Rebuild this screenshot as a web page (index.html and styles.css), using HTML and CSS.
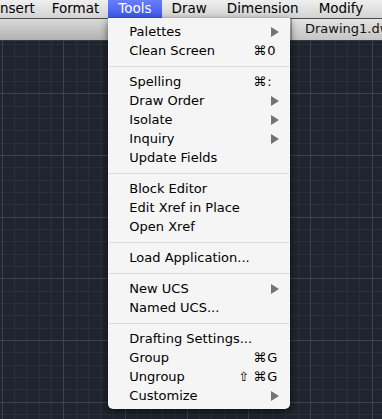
FILE: index.html
```html
<!DOCTYPE html>
<html lang="en">
<head>
    <meta charset="UTF-8">
    <title>Tools menu</title>
    <link rel="stylesheet" href="styles.css">
</head>
<body>
    <div class="menubar">
        <div class="menubar-item">nsert</div>
        <div class="menubar-item">Format</div>
        <div class="menubar-item active">
            Tools
            <div class="menu">
                <div class="menu-row"><span class="label">Palettes</span><span class="arrow"></span></div>
                <div class="menu-row"><span class="label">Clean Screen</span><span class="keys"><span class="mods">⌘</span><span class="key">0</span></span></div>
                <div class="separator"></div>
                <div class="menu-row"><span class="label">Spelling</span><span class="keys"><span class="mods">⌘</span><span class="key">:</span></span></div>
                <div class="menu-row"><span class="label">Draw Order</span><span class="arrow"></span></div>
                <div class="menu-row"><span class="label">Isolate</span><span class="arrow"></span></div>
                <div class="menu-row"><span class="label">Inquiry</span><span class="arrow"></span></div>
                <div class="menu-row"><span class="label">Update Fields</span></div>
                <div class="separator"></div>
                <div class="menu-row"><span class="label">Block Editor</span></div>
                <div class="menu-row"><span class="label">Edit Xref in Place</span></div>
                <div class="menu-row"><span class="label">Open Xref</span></div>
                <div class="separator"></div>
                <div class="menu-row"><span class="label">Load Application...</span></div>
                <div class="separator"></div>
                <div class="menu-row"><span class="label">New UCS</span><span class="arrow"></span></div>
                <div class="menu-row"><span class="label">Named UCS...</span></div>
                <div class="separator"></div>
                <div class="menu-row"><span class="label">Drafting Settings...</span></div>
                <div class="menu-row"><span class="label">Group</span><span class="keys"><span class="mods">⌘</span><span class="key">G</span></span></div>
                <div class="menu-row"><span class="label">Ungroup</span><span class="keys"><span class="mods">⇧ ⌘</span><span class="key">G</span></span></div>
                <div class="menu-row"><span class="label">Customize</span><span class="arrow"></span></div>
            </div>
        </div>
        <div class="menubar-item right">Draw</div>
        <div class="menubar-item right">Dimension</div>
        <div class="menubar-item right">Modify</div>
    </div>

    <div class="tabstrip">
        <div class="tab-space"></div>
        <div class="tab">Drawing1.dwg</div>
    </div>

    <div class="canvas"></div>
</body>
</html>
```

FILE: styles.css
```css
html, body {
    margin: 0;
    padding: 0;
}

body {
    width: 382px;
    height: 419px;
    overflow: hidden;
    background-color: #1f252e;
    font-family: "DejaVu Sans", sans-serif;
    color: #000;
    display: flex;
    flex-direction: column;
}

/* top menu bar */
.menubar {
    height: 18px;
    flex: none;
    display: flex;
    background: linear-gradient(#efefef, #d3d3d3);
    border-bottom: 1px solid #4c4c4c;
    font-size: 13.5px;
    line-height: 16px;
    white-space: nowrap;
    position: relative;
    z-index: 2;
}

.menubar-item {
    padding: 0 9px;
    position: relative;
}

.menubar-item:first-child {
    padding-left: 0;
    padding-right: 8px;
}

.menubar-item.right {
    padding: 0 10px;
}

.menubar-item.active {
    padding: 0 10px;
    background: linear-gradient(#6a7ff7, #3856ee);
    color: #fff;
}

/* dropdown */
.menu {
    position: absolute;
    top: 18px;
    left: 0;
    width: 182px;
    padding: 4px 0;
    background-color: #f5f5f5;
    border-radius: 0 0 5px 5px;
    box-shadow: 0 3px 9px rgba(0, 0, 0, 0.55), 0 0 1px rgba(0, 0, 0, 0.4);
    color: #000;
    font-size: 13px;
}

.menu-row {
    height: 19px;
    box-sizing: border-box;
    padding: 1px 11px 0 21px;
    line-height: 18px;
    display: flex;
    align-items: center;
}

.label {
    flex: 1;
}

.keys {
    display: flex;
}

.mods {
    text-align: right;
}

.key {
    width: 12px;
    padding-left: 1px;
}

.arrow {
    width: 0;
    height: 0;
    margin-top: -1px;
    border-top: 5px solid transparent;
    border-bottom: 5px solid transparent;
    border-left: 8px solid #737373;
}

.separator {
    height: 12px;
    position: relative;
}

.separator::after {
    content: "";
    position: absolute;
    left: 1px;
    right: 1px;
    top: 6px;
    height: 1px;
    background-color: #dadada;
}

/* document tabs */
.tabstrip {
    height: 21px;
    flex: none;
    display: flex;
    border-bottom: 1px solid #3a3a3a;
    background: linear-gradient(#d9d9d9, #b2b2b2);
    white-space: nowrap;
}

.tab-space {
    width: 291px;
    flex: none;
}

.tab {
    flex: 1;
    padding-left: 13px;
    font-size: 13px;
    line-height: 20px;
    color: #111;
    background: linear-gradient(#e4e4e4, #c4c4c4);
    border-left: 1px solid #9a9a9a;
}

/* drawing area grid */
.canvas {
    flex: 1;
    background-color: #1f252e;
    background-image:
        repeating-linear-gradient(to right, transparent 0 1.67px, #3a4253 1.67px 2.67px, transparent 2.67px 61.67px),
        repeating-linear-gradient(to bottom, transparent 0 52.3px, #3a4253 52.3px 53.3px, transparent 53.3px 61.67px),
        repeating-linear-gradient(to right, transparent 0 1.67px, #29303b 1.67px 2.67px, transparent 2.67px 12.33px),
        repeating-linear-gradient(to bottom, transparent 0 3px, #29303b 3px 4px, transparent 4px 12.33px);
}
```
